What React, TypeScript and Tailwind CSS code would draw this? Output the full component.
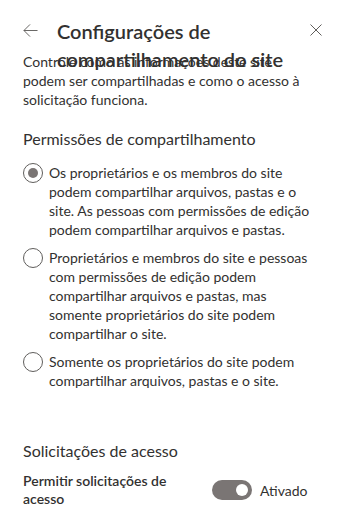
import React from 'react';

const options = [
  'Os proprietários e os membros do site podem compartilhar arquivos, pastas e o site. As pessoas com permissões de edição podem compartilhar arquivos e pastas.',
  'Proprietários e membros do site e pessoas com permissões de edição podem compartilhar arquivos e pastas, mas somente proprietários do site podem compartilhar o site.',
  'Somente os proprietários do site podem compartilhar arquivos, pastas e o site.',
];

export default function App() {
  const selected = 0;

  return (
    <div className="w-[339px] h-[519px] overflow-hidden bg-white text-[#323130] font-['Lato',sans-serif]">
      {/* Header */}
      <div className="h-[52px] flex items-start pl-[23px] pr-[17px] pt-[17px]">
        <button className="mt-[6px] w-[15px] h-[15px] text-[#605e5c]" aria-label="Voltar">
          <svg viewBox="0 0 16 16" width="15" height="15" fill="none" stroke="currentColor" strokeWidth="1">
            <path d="M15.5 8H1M7.5 1.5L1 8l6.5 6.5" />
          </svg>
        </button>
        <h1 className="ml-[19px] flex-1 text-[20px] leading-[28px] font-semibold">
          Configurações de compartilhamento do site
        </h1>
        <button className="mt-[7px] w-[12px] h-[12px] text-[#605e5c]" aria-label="Fechar">
          <svg viewBox="0 0 12 12" width="12" height="12" fill="none" stroke="currentColor" strokeWidth="1">
            <path d="M0.5 0.5l11 11M11.5 0.5l-11 11" />
          </svg>
        </button>
      </div>

      <div className="pl-[23px] pr-[24px]">
        <p className="text-[14px] leading-[19px]">
          Controle como as informações deste site podem ser compartilhadas e como o acesso à solicitação funciona.
        </p>

        {/* Sharing permissions */}
        <h2 className="mt-[19px] text-[16px] leading-[22px]">Permissões de compartilhamento</h2>
        <div className="mt-[13px] flex flex-col gap-[9px]">
          {options.map((text, i) => (
            <label key={i} className="flex items-start text-[14px] leading-[19px]">
              <span className="shrink-0 w-[20px] h-[20px] rounded-full border border-[#605e5c] flex items-center justify-center">
                {i === selected && <span className="w-[10px] h-[10px] rounded-full bg-[#7a7574]" />}
              </span>
              <span className="ml-[6px]">{text}</span>
            </label>
          ))}
        </div>

        {/* Access requests */}
        <h2 className="mt-[50px] text-[16px] leading-[22px]">Solicitações de acesso</h2>
        <div className="mt-[10px] flex items-center">
          <div className="w-[189px] pr-[30px] text-[14px] leading-[18px] font-semibold">
            Permitir solicitações de acesso
          </div>
          <div className="w-[40px] h-[20px] rounded-full bg-[#7a7574] flex items-center justify-end pr-[4px]">
            <span className="w-[12px] h-[12px] rounded-full bg-white" />
          </div>
          <span className="ml-[8px] text-[14px] leading-[19px]">Ativado</span>
        </div>
      </div>
    </div>
  );
}
